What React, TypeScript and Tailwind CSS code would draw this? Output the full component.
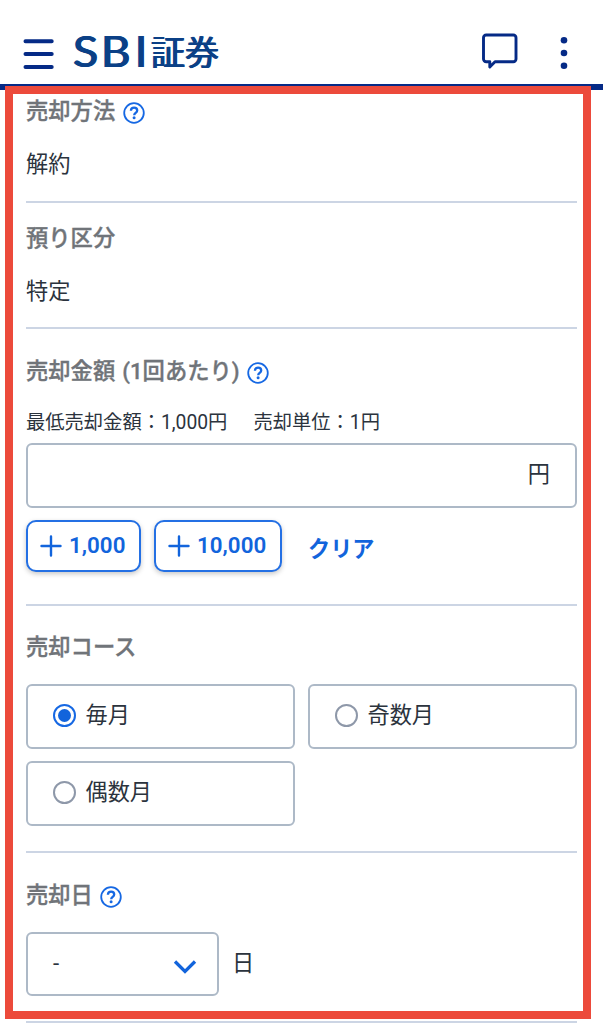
import type { ReactNode } from "react";
import clsx from "clsx";

function HelpIcon() {
  return (
    <svg width="22" height="22" viewBox="0 0 22 22" fill="none" stroke="#1668e3" className="mt-[3px] shrink-0">
      <circle cx="11" cy="11" r="9.8" strokeWidth="1.8" />
      <path d="M7.9 8.7c.1-1.9 1.4-3 3.2-3s3.1 1.1 3.1 2.7c0 2.4-3 2.5-3 4.8" strokeWidth="2.3" />
      <circle cx="11.1" cy="15.8" r="1.5" fill="#1668e3" stroke="none" />
    </svg>
  );
}

function Section({ title, help, className, children }: { title: string; help?: boolean; className?: string; children: ReactNode }) {
  return (
    <section className={clsx("border-b-2 border-[#ccd5e4]", className)}>
      <h2 className="flex h-8 items-center gap-[7.5px] text-[22.3px] font-medium leading-8 text-[#707479] whitespace-nowrap [word-spacing:1.5px] [-webkit-text-stroke:0.35px]">
        {title}
        {help && <HelpIcon />}
      </h2>
      {children}
    </section>
  );
}

function AddButton({ amount, className }: { amount: string; className: string }) {
  return (
    <button
      className={clsx(
        "flex h-[52px] items-center gap-[7px] rounded-[10px] border-2 border-[#2470e4] bg-white pl-3 text-[22.4px] font-semibold text-[#1264dc] shadow-[0_2px_5px_rgba(0,0,0,0.22)]",
        className
      )}
    >
      <svg width="22" height="22" viewBox="0 0 22 22" stroke="currentColor" strokeWidth="2.4" strokeLinecap="round">
        <path d="M1.5 11h19M11 1.5v19" />
      </svg>
      <span className="-mt-[3px]">{amount}</span>
    </button>
  );
}

function RadioCard({ label, checked }: { label: string; checked?: boolean }) {
  return (
    <label className="flex h-[65px] items-center gap-[9.5px] rounded-[6px] border-2 border-[#adb9c7] pb-[3px] pl-[25px]">
      <span
        className={clsx(
          "flex size-[23px] items-center justify-center rounded-full border-2",
          checked ? "border-[#1668e3]" : "border-[#8e98a9]"
        )}
      >
        {checked && <span className="size-[13px] rounded-full bg-[#1264dc]" />}
      </span>
      <span>{label}</span>
    </label>
  );
}

export default function App() {
  return (
    <div className="relative h-[1024px] w-[603px] overflow-hidden bg-white font-[Roboto,'Noto_Sans_CJK_JP',sans-serif] text-[22.2px] leading-8 text-[#2b333d]">
      <header className="flex h-[90px] items-start border-b-[6px] border-[#052a86] text-[#052a86]">
        <svg width="31" height="31" viewBox="0 0 31 31" stroke="currentColor" strokeWidth="4" strokeLinecap="round" className="mt-[38px] ml-[23px]">
          <path d="M2.5 3.2h26.2M2.5 16h26.2M2.5 29h26.2" />
        </svg>
        {/* wordmark: sideways shadows thicken only the vertical stems */}
        <div className="mt-[27px] ml-[19px] flex h-12 items-center whitespace-nowrap font-[Lato] text-[43px] leading-[48px] text-[#0b4086] [text-shadow:0.8px_0_0_currentColor,-0.8px_0_0_currentColor]">
          <span className="w-[28px] origin-left scale-x-[1.08] font-normal">S</span>
          <span className="w-[34px] origin-left scale-x-[1.06] font-normal">B</span>
          <span className="w-[16px] font-normal">I</span>
          <span className="font-['Noto_Sans_CJK_JP'] text-[34px] leading-[48px] [text-shadow:0.7px_0_0_currentColor,-0.7px_0_0_currentColor]">証券</span>
        </div>
        <div className="mt-[33px] mr-[35px] ml-auto flex">
          <svg width="36" height="37" viewBox="0 0 36 37" fill="none" stroke="currentColor" strokeWidth="2.9" strokeLinejoin="round">
            <path d="M4.2 2h27.1a2.7 2.7 0 0 1 2.7 2.7v21.4a2.7 2.7 0 0 1-2.7 2.7H13L7.8 34V28.8H4.2a2.7 2.7 0 0 1-2.7-2.7V4.7A2.7 2.7 0 0 1 4.2 2Z" />
          </svg>
          <svg width="8" height="37" viewBox="0 0 8 37" fill="currentColor" className="ml-[42px]">
            <circle cx="4" cy="7.2" r="3.3" />
            <circle cx="4" cy="20" r="3.3" />
            <circle cx="4" cy="32.8" r="3.3" />
          </svg>
        </div>
      </header>

      <main className="mr-[26px] ml-[26px]">
        <Section title="売却方法" help className="h-[113px] pt-[5px]">
          <p className="mt-[21px]">解約</p>
        </Section>

        <Section title="預り区分" className="h-[126px] pt-[19px]">
          <p className="mt-[21px]">特定</p>
        </Section>

        <Section title="売却金額 (1回あたり)" help className="h-[277px] pt-[26px]">
          <p className="mt-6 flex gap-[26px] text-[19.3px] leading-6 whitespace-nowrap">
            <span>最低売却金額：1,000円</span>
            <span>売却単位：1円</span>
          </p>
          <div className="mt-2 flex h-[65px] items-center rounded-[6px] border-2 border-[#adb9c7] pr-[25px] pb-[3px]">
            <input type="text" className="h-full min-w-0 flex-1 outline-none" />
            <span>円</span>
          </div>
          <div className="mt-3 flex items-center">
            <AddButton amount="1,000" className="w-[115px]" />
            <AddButton amount="10,000" className="ml-[13px] w-[128px]" />
            <button className="ml-[26px] pt-[5px] font-bold text-[#1264dc]">クリア</button>
          </div>
        </Section>

        <Section title="売却コース" className="h-[247px] pt-[25px]">
          <div className="mt-[21px] grid grid-cols-2 gap-x-[13px] gap-y-3">
            <RadioCard label="毎月" checked />
            <RadioCard label="奇数月" />
            <RadioCard label="偶数月" />
          </div>
        </Section>

        <Section title="売却日" help className="h-[170px] pt-[26px]">
          <div className="mt-[21px] flex items-center">
            <button className="flex h-16 w-[193px] items-center justify-between rounded-[6px] border-2 border-[#adb9c7] pr-5 pl-[25px]">
              <span className="-mt-0.5">-</span>
              <svg width="24" height="16" viewBox="0 0 24 16" fill="none" stroke="#1264dc" strokeWidth="3.3" className="mt-[6px]">
                <path d="m2 2.5 10 10 10-10" />
              </svg>
            </button>
            <span className="-mt-[2px] ml-[13px]">日</span>
          </div>
        </Section>
      </main>

      {/* highlight frame over the form */}
      <div className="pointer-events-none absolute top-[86px] left-[5px] h-[933px] w-[586px] border-8 border-[#ec4a3b]" />
    </div>
  );
}
